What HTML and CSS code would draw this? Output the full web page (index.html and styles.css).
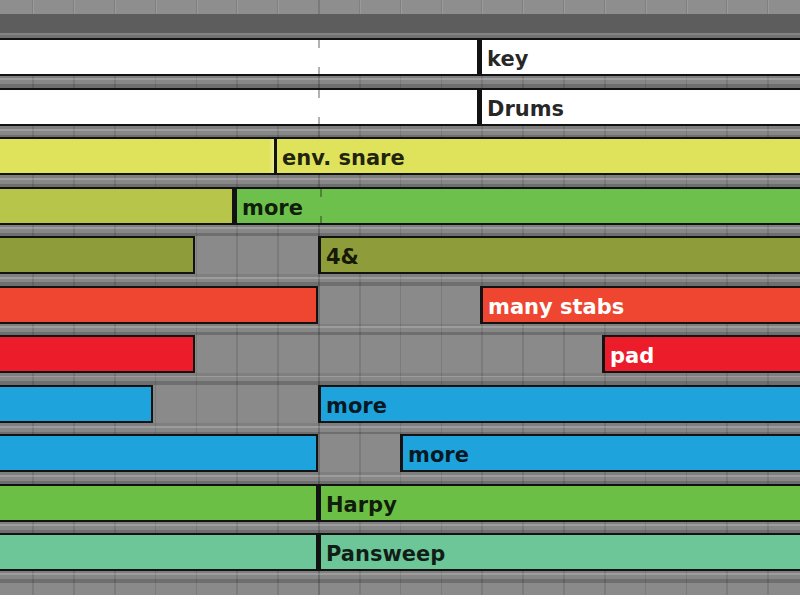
FILE: index.html
```html
<!DOCTYPE html>
<html>
<head>
<meta charset="utf-8">
<title>Arrangement</title>
<link rel="stylesheet" href="styles.css">
</head>
<body>
<div class="screen">
  <div class="ruler"></div>
  <div class="band"></div>
  <div class="lanes">
    <div class="lane">
      <div class="track">
        <div class="clip white end" style="width:479px"><span class="mark" style="left:318px"></span></div>
        <div class="clip white start fill"><span class="name">key</span></div>
      </div>
      <div class="sep"></div>
    </div>
    <div class="lane">
      <div class="track">
        <div class="clip white end" style="width:479px"><span class="mark" style="left:318px"></span></div>
        <div class="clip white start fill"><span class="name">Drums</span></div>
      </div>
      <div class="sep"></div>
    </div>
    <div class="lane">
      <div class="track">
        <div class="clip yellow" style="width:274px"><span class="fade"></span></div>
        <div class="clip yellow start fill"><span class="name">env. snare</span></div>
      </div>
      <div class="sep"></div>
    </div>
    <div class="lane">
      <div class="track">
        <div class="clip lime end" style="width:234px"></div>
        <div class="clip green start fill"><span class="mark" style="left:83px"></span><span class="name">more</span></div>
      </div>
      <div class="sep"></div>
    </div>
    <div class="lane">
      <div class="track">
        <div class="clip olive end" style="width:195px"></div>
        <div class="gap" style="width:123px"></div>
        <div class="clip olive start fill"><span class="name">4&amp;</span></div>
      </div>
      <div class="sep"></div>
    </div>
    <div class="lane">
      <div class="track">
        <div class="clip orange end" style="width:318px"></div>
        <div class="gap" style="width:162px"></div>
        <div class="clip orange start fill"><span class="name light">many stabs</span></div>
      </div>
      <div class="sep"></div>
    </div>
    <div class="lane">
      <div class="track">
        <div class="clip red end" style="width:195px"></div>
        <div class="gap" style="width:407px"></div>
        <div class="clip red start fill"><span class="name light">pad</span></div>
      </div>
      <div class="sep"></div>
    </div>
    <div class="lane">
      <div class="track">
        <div class="clip blue end" style="width:153px"></div>
        <div class="gap" style="width:165px"></div>
        <div class="clip blue start fill"><span class="name">more</span></div>
      </div>
      <div class="sep"></div>
    </div>
    <div class="lane">
      <div class="track">
        <div class="clip blue end" style="width:318px"></div>
        <div class="gap" style="width:82px"></div>
        <div class="clip blue start fill"><span class="name">more</span></div>
      </div>
      <div class="sep"></div>
    </div>
    <div class="lane">
      <div class="track">
        <div class="clip grass end" style="width:318px"></div>
        <div class="clip grass start fill"><span class="name">Harpy</span></div>
      </div>
      <div class="sep"></div>
    </div>
    <div class="lane">
      <div class="track">
        <div class="clip teal end" style="width:318px"></div>
        <div class="clip teal start fill"><span class="name">Pansweep</span></div>
      </div>
      <div class="sep"></div>
    </div>
    <div class="empty"></div>
  </div>
  <div class="foot"></div>
</div>
</body>
</html>
```

FILE: styles.css
```css
html, body {
  margin: 0;
  padding: 0;
  background: #ffffff;
}

.screen {
  width: 800px;
  height: 600px;
  display: flex;
  flex-direction: column;
  overflow: hidden;
  background: #8b8b8b;
  font-family: "DejaVu Sans", "Liberation Sans", sans-serif;
}

.ruler {
  height: 14px;
  flex: none;
  background-color: #8e8e8e;
  background-image:
    linear-gradient(90deg, transparent 318px, #7a7a7a 318px 320px, transparent 320px),
    repeating-linear-gradient(90deg, transparent 0 32.3px, #808080 32.3px 33.3px, #9a9a9a 33.3px 34.3px, transparent 34.3px 40.83px);
}

.band {
  height: 24px;
  flex: none;
  background: linear-gradient(to bottom, #5d5d5d 0 19px, #848484 19px 21px, #727272 21px 24px);
}

.lanes {
  flex: 1;
  display: flex;
  flex-direction: column;
  background-color: #8a8a8a;
  background-image:
    linear-gradient(90deg, transparent 318px, #6f6f6f 318px 320px, transparent 320px),
    repeating-linear-gradient(90deg, transparent 0 32.3px, #7b7b7b 32.3px 34px, transparent 34px 40.83px);
}

.lane {
  height: 49.55px;
  flex: none;
  display: flex;
  flex-direction: column;
}

.track {
  height: 38px;
  flex: none;
  display: flex;
}

.sep {
  flex: 1;
  background: linear-gradient(to bottom,
    rgba(0, 0, 0, 0.08) 0 2.5px,
    rgba(255, 255, 255, 0.16) 2.5px 4.5px,
    rgba(0, 0, 0, 0.02) 4.5px 8.5px,
    rgba(0, 0, 0, 0.2) 8.5px 100%);
}

.empty {
  flex: 1;
}

.foot {
  height: 5px;
  flex: none;
  background: #ffffff;
}

.gap {
  flex: none;
  height: 38px;
}

.clip {
  box-sizing: border-box;
  height: 38px;
  flex: none;
  position: relative;
  overflow: hidden;
  border-top: 2px solid #121212;
  border-bottom: 2px solid #121212;
}

.clip.end {
  border-right: 2px solid #121212;
}

.clip.start {
  border-left: 3px solid #121212;
}

.clip.fill {
  flex: 1;
}

.white { background: #ffffff; }
.yellow { background: #dfe35c; }
.lime { background: #b8c54b; }
.green { background: #6dc04c; }
.olive { background: #8e9c39; }
.orange { background: #ee4631; }
.red { background: #ec1c2b; }
.blue { background: #1fa3dd; }
.grass { background: #6cbf45; }
.teal { background: #6cc698; }

.name {
  display: block;
  padding-left: 5px;
  line-height: 38px;
  font-size: 21px;
  font-weight: bold;
  white-space: nowrap;
  color: rgba(0, 0, 0, 0.86);
}

.name.light {
  color: #ffffff;
}

.mark {
  position: absolute;
  top: 0;
  bottom: 0;
  width: 2px;
  background: linear-gradient(to bottom, rgba(0, 0, 0, 0.3) 0 8px, transparent 8px 27px, rgba(0, 0, 0, 0.3) 27px);
}

.fade {
  position: absolute;
  top: 0;
  bottom: 0;
  right: 0;
  width: 5px;
  background: linear-gradient(90deg, rgba(255, 255, 255, 0) 0, rgba(255, 255, 255, 0.35) 100%);
}
```
